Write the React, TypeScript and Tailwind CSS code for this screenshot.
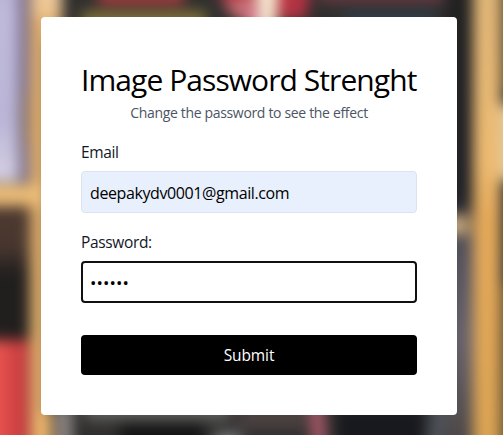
import type { ReactNode } from "react";

function Backdrop() {
  return (
    <svg className="absolute inset-0 h-full w-full" viewBox="0 0 503 435" preserveAspectRatio="none" aria-hidden="true">
      <defs>
        <filter id="soft" x="-60" y="-60" width="623" height="555" filterUnits="userSpaceOnUse" colorInterpolationFilters="sRGB">
          <feGaussianBlur stdDeviation="7" />
        </filter>
        <linearGradient id="lilac" x1="0" y1="0" x2="0" y2="1">
          <stop offset="0" stopColor="#aaa4c8" />
          <stop offset="0.3" stopColor="#bfb9da" />
          <stop offset="0.75" stopColor="#bbb6d7" />
          <stop offset="1" stopColor="#d6d1e4" />
        </linearGradient>
        <linearGradient id="brown" x1="0" y1="0" x2="0" y2="1">
          <stop offset="0" stopColor="#4c382f" />
          <stop offset="0.3" stopColor="#49372f" />
          <stop offset="0.5" stopColor="#211f1e" />
          <stop offset="1" stopColor="#211f1e" />
        </linearGradient>
        <linearGradient id="red" x1="0" y1="0" x2="1" y2="0">
          <stop offset="0" stopColor="#f5625a" />
          <stop offset="0.57" stopColor="#f05a54" />
          <stop offset="1" stopColor="#c0353b" />
        </linearGradient>
        <linearGradient id="wood" x1="0" y1="0" x2="0" y2="1">
          <stop offset="0" stopColor="#ddb57b" />
          <stop offset="0.4" stopColor="#edba70" />
          <stop offset="0.5" stopColor="#e5aa5a" />
          <stop offset="1" stopColor="#daa252" />
        </linearGradient>
        <linearGradient id="shelf" x1="0" y1="0" x2="0" y2="1">
          <stop offset="0" stopColor="#222120" />
          <stop offset="0.46" stopColor="#202127" />
          <stop offset="0.55" stopColor="#51505b" />
          <stop offset="0.72" stopColor="#65616c" />
          <stop offset="0.92" stopColor="#4b4544" />
          <stop offset="1" stopColor="#292827" />
        </linearGradient>
      </defs>
      <rect width="503" height="435" fill="#302f2e" />
      <g filter="url(#soft)">
        <rect x="-60" y="-60" width="623" height="555" fill="#302f2e" />
        <rect x="-60" y="-60" width="89" height="242" fill="url(#lilac)" />
        <path d="M18-60h12V182H18z" fill="#675a77" opacity="0.75" />
        <path d="M22 95h9v50h-9z" fill="#84725f" opacity="0.7" />
        <rect x="-60" y="206" width="89" height="136" fill="url(#brown)" />
        <rect x="-60" y="340" width="89" height="155" fill="url(#red)" />
        <path d="M30-60h32v100H49V495H30z" fill="#dfad6b" />
        <path d="M33-60h29V17H33z" fill="#edc795" />
        <path d="M35 413h17v82H35z" fill="#edb66c" />
        <rect x="-60" y="184" width="108" height="22" fill="#ecbd78" />
        <path d="M98-25h86V4H98z" fill="#a83a40" />
        <path d="M82 11h124v18H82z" fill="#807239" />
        <path d="M212-20l23 40h70l12-60z" fill="#b43343" />
        <path d="M222 5l28 22 10-36z" fill="#c77076" />
        <path d="M255-30h25l-4 60h-17z" fill="#f4ead0" />
        <path d="M248 10h11v20h-11z" fill="#d980a0" />
        <path d="M320-20h124V2H320z" fill="#6b3a44" />
        <path d="M344 12h90v15h-90z" fill="#2e3f4b" />
        <rect x="446" y="-60" width="28" height="555" fill="url(#shelf)" />
        <rect x="473" y="-60" width="28" height="555" fill="url(#wood)" />
        <path d="M503-60h45V90h-45zM503 285h45V495h-45z" fill="#655132" />
        <path d="M500 105h45v75h-45z" fill="#e2c89b" />
        <path d="M445 215h23v20h-23z" fill="#c9ab7c" />
        <path d="M57 405h15v80H57z" fill="#928c8a" />
        <path d="M85 400h145v20H85z" fill="#626361" />
        <path d="M120 423h84v60h-84z" fill="#161516" />
        <path d="M215 433h26v50h-26z" fill="#7d7d80" />
        <path d="M238 405h68v24h-68z" fill="#4b4141" />
        <path d="M308 402h16l5 85h-13z" fill="#a75968" />
        <path d="M337 408h87v80h-87z" fill="#17191e" />
        <path d="M431 403h17l-10 85h-14z" fill="#4d535a" />
      </g>
    </svg>
  );
}

function Field({ label, children }: { label: string; children: ReactNode }) {
  return (
    <label className="mt-4 block text-base text-[#111827]">
      <span className="block h-6 text-[15.5px] leading-[26px] tracking-[-0.35px]">{label}</span>
      {children}
    </label>
  );
}

export default function App() {
  return (
    <main className="relative isolate flex h-[435px] w-[503px] overflow-hidden pt-[17px] pl-[41px] font-['Open_Sans',sans-serif]">
      <div className="absolute inset-0 -z-10"><Backdrop /></div>
      <section className="h-[398px] w-[416px] rounded bg-white p-10">
        <header className="text-center">
          <h1 className="h-[46px] pt-[4px] text-left text-[30px] leading-[38px] tracking-[-0.93px] whitespace-nowrap text-black">Image Password Strenght</h1>
          <p className="h-5 text-[14px] leading-5 tracking-[-0.33px] text-[#4b5563]">Change the password to see the effect</p>
        </header>
        <form onSubmit={(e) => e.preventDefault()}>
          <Field label="Email">
            <input type="text" defaultValue="deepakydv0001@gmail.com" className="mt-2 block h-[42px] w-full rounded border border-[#dce3ed] bg-[#e8f0fe] px-2 pt-px text-[16px] tracking-[-0.4px] text-black outline-none" />
          </Field>
          <Field label="Password:">
            <input type="password" defaultValue="secret" className="mt-2 block h-[42px] w-full rounded border-2 border-[#101010] bg-white px-[7px] text-[17px] tracking-[0.1px] text-black outline-none" />
          </Field>
          <button className="mt-8 block h-10 w-full rounded bg-black pt-px text-[15.5px] font-medium tracking-[-0.1px] text-white">Submit</button>
        </form>
      </section>
    </main>
  );
}
